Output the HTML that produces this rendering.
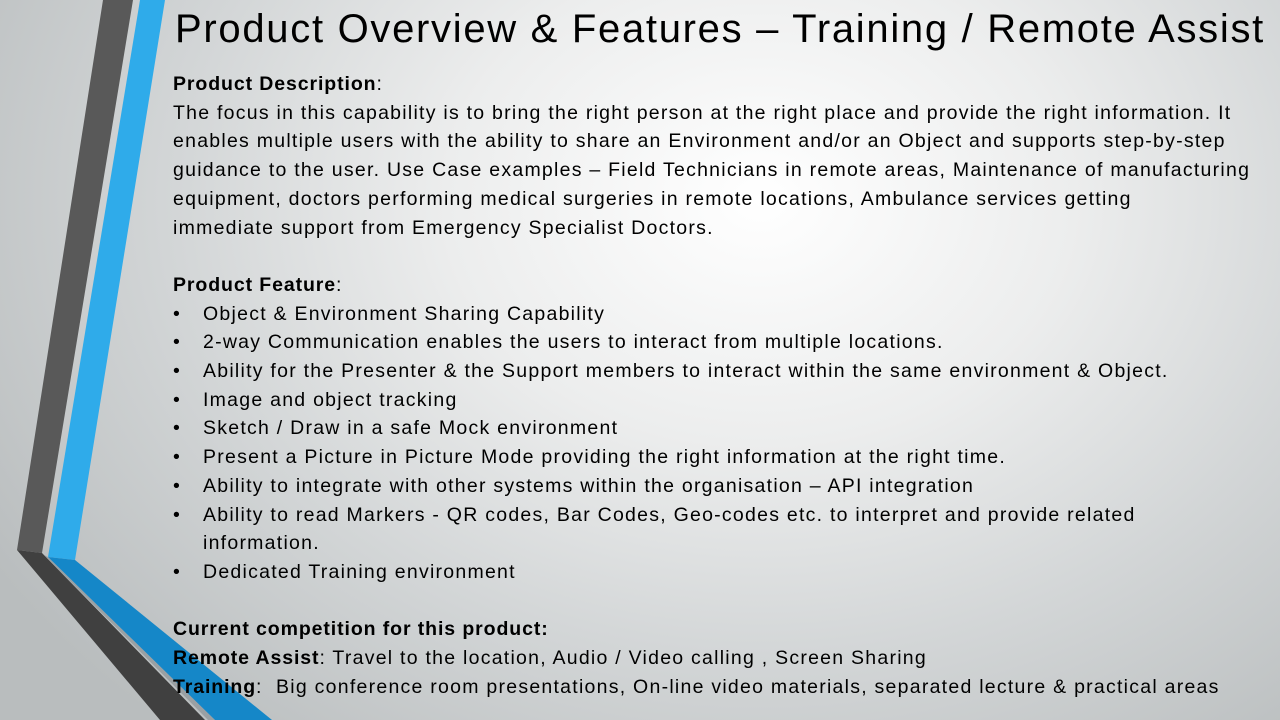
<!DOCTYPE html>
<html><head><meta charset="utf-8"><style>
html,body{margin:0;padding:0}
body{width:1280px;height:720px;overflow:hidden;position:relative;
background:radial-gradient(ellipse 900px 700px at 760px 200px,#ffffff 0%,#eceded 35%,#d3d6d7 65%,#b9bdbe 100%);
font-family:"Liberation Sans",sans-serif;color:#000}
svg{position:absolute;left:0;top:0}
.t{position:absolute;left:175px;top:7px;font-size:40px;white-space:nowrap;letter-spacing:1.7px}
.b{position:absolute;left:173px;top:70px;font-size:19.5px;line-height:28.7px;white-space:nowrap;letter-spacing:1.25px}
.b b{letter-spacing:0.9px}
.li{position:relative;padding-left:30px}
.li:before{content:"•";position:absolute;left:0}
</style></head><body>
<svg width="1280" height="720">
<polygon points="103,0 133,0 42,553 17,550" fill="#595959"/>
<polygon points="140,0 165,0 75,560 48,557" fill="#2fabea"/>
<polygon points="17,550 42,553 205,720 160,720" fill="#404040"/>
<polygon points="44,555 48,557 215,720 208,720" fill="#9aa0a3"/>
<polygon points="48,557 75,560 272,720 215,720" fill="#1587c8"/>
</svg>
<div class="t">Product Overview &amp; Features – Training / Remote Assist</div>
<div class="b">
<div><b>Product Description</b>:</div>
<div>The focus in this capability is to bring the right person at the right place and provide the right information. It</div>
<div>enables multiple users with the ability to share an Environment and/or an Object and supports step-by-step</div>
<div>guidance to the user. Use Case examples – Field Technicians in remote areas, Maintenance of manufacturing</div>
<div>equipment, doctors performing medical surgeries in remote locations, Ambulance services getting</div>
<div>immediate support from Emergency Specialist Doctors.</div>
<div>&nbsp;</div>
<div><b>Product Feature</b>:</div>
<div class="li">Object &amp; Environment Sharing Capability</div>
<div class="li">2-way Communication enables the users to interact from multiple locations.</div>
<div class="li">Ability for the Presenter &amp; the Support members to interact within the same environment &amp; Object.</div>
<div class="li">Image and object tracking</div>
<div class="li">Sketch / Draw in a safe Mock environment</div>
<div class="li">Present a Picture in Picture Mode providing the right information at the right time.</div>
<div class="li">Ability to integrate with other systems within the organisation – API integration</div>
<div class="li">Ability to read Markers - QR codes, Bar Codes, Geo-codes etc. to interpret and provide related<br>information.</div>
<div class="li">Dedicated Training environment</div>
<div>&nbsp;</div>
<div><b>Current competition for this product:</b></div>
<div><b>Remote Assist</b>: Travel to the location, Audio / Video calling , Screen Sharing</div>
<div><b>Training</b>:&nbsp; Big conference room presentations, On-line video materials, separated lecture &amp; practical areas</div>
</div>
</body></html>
